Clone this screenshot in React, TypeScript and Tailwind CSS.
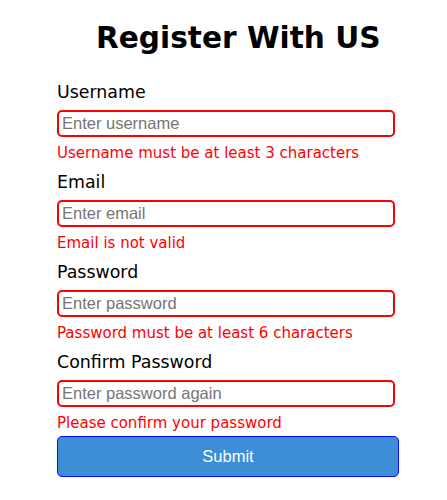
import { useState } from "react";

const fields = [
  { id: "username", label: "Username", type: "text", placeholder: "Enter username", error: "Username must be at least 3 characters" },
  { id: "email", label: "Email", type: "email", placeholder: "Enter email", error: "Email is not valid" },
  { id: "password", label: "Password", type: "password", placeholder: "Enter password", error: "Password must be at least 6 characters" },
  { id: "confirm", label: "Confirm Password", type: "password", placeholder: "Enter password again", error: "Please confirm your password" },
];

export default function App() {
  const [values, setValues] = useState<Record<string, string>>({});

  return (
    <div className="min-h-[500px] bg-white font-['DejaVu_Sans',sans-serif]">
      <form className="ml-[57px] w-[342px] pt-[20px]" onSubmit={(e) => e.preventDefault()}>
        <h1 className="pl-[39px] text-[29.6px] font-bold leading-[36px] text-black">Register With US</h1>

        <div className="mt-[26px]">
          {fields.map((f, i) => (
            <div key={f.id} className={i > 0 ? "mt-[10px]" : ""}>
              <label htmlFor={f.id} className="block text-[17.4px] leading-[20px] text-black">
                {f.label}
              </label>
              <input
                id={f.id}
                type={f.type}
                placeholder={f.placeholder}
                value={values[f.id] ?? ""}
                onChange={(e) => setValues({ ...values, [f.id]: e.target.value })}
                className="mt-[8px] box-border block h-[27px] w-[338px] rounded-[5px] border-2 border-[#ff0000] px-[3px] font-['Liberation_Sans',Arial,sans-serif] text-[16.5px] text-black outline-none placeholder:text-[#757575]"
              />
              <p className="mt-[7px] text-[15px] leading-[18px] text-[#ff0000]">{f.error}</p>
            </div>
          ))}
        </div>

        <button
          type="submit"
          className="mt-[4px] block h-[41px] w-[342px] rounded-[5px] border border-[#0a0aff] bg-[#3c8ed6] font-['Liberation_Sans',Arial,sans-serif] text-[16.5px] text-white"
        >
          Submit
        </button>
      </form>
    </div>
  );
}
